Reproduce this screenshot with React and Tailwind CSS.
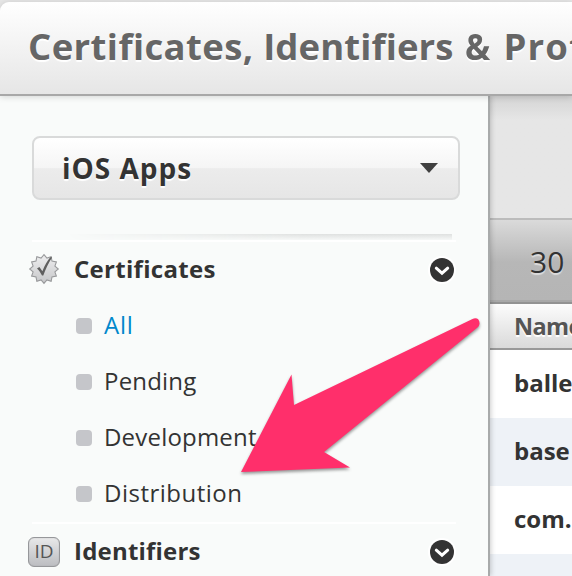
import React from "react";

const rows = ["balle", "base", "com.", ""];

const items = [
  { label: "All", style: "text-[#0088cc] tracking-[0.7px]" },
  { label: "Pending", style: "text-[#333] tracking-[0.2px]" },
  { label: "Development", style: "text-[#333] tracking-[0.2px]" },
  { label: "Distribution", style: "text-[#333] tracking-[0.5px]" },
];

function SealIcon() {
  const points = Array.from({ length: 24 }, (_, i) => {
    const r = i % 2 === 0 ? 14.3 : 11.3;
    const a = (i * Math.PI) / 12;
    return `${(16 + r * Math.sin(a)).toFixed(2)},${(16 - r * Math.cos(a)).toFixed(2)}`;
  }).join(" ");
  return (
    <svg className="h-8 w-8" viewBox="0 0 32 32">
      <defs>
        <linearGradient id="seal" x1="0" y1="0" x2="0" y2="1">
          <stop offset="0" stopColor="#eeeeef" />
          <stop offset="1" stopColor="#c6c7c9" />
        </linearGradient>
      </defs>
      <polygon points={points} fill="url(#seal)" stroke="#98999b" strokeWidth="1.1" />
      <path d="M9 15.500l2.400-1.500 3 4.200C16.800 12.500 19 8 22.300 4.300h1.800C20.500 10 17.400 16.500 15.300 22.500h-1.300C12.800 20 11.100 17.500 9 15.500z" fill="#5f5f5f" />
    </svg>
  );
}

function IdIcon() {
  return (
    <div className="flex h-[30px] w-8 items-center justify-center rounded-[6px] border border-[#96979a] bg-linear-to-b from-[#e8e8e9] to-[#bcbdc1] pb-px font-['Open_Sans',sans-serif] text-[19px] leading-none font-medium text-[#555] shadow-[inset_0_0_1px_#999]">
      ID
    </div>
  );
}

function Toggle() {
  return (
    <svg className="h-7 w-7" viewBox="0 0 28 28">
      <circle cx="14" cy="14" r="14" fill="#fff" />
      <circle cx="14" cy="14" r="12" fill="#333" />
      <path d="M8.300 12.200L14 17.200l5.700-5" fill="none" stroke="#fff" strokeWidth="3" strokeLinecap="round" />
    </svg>
  );
}

function SectionTitle({ icon, children }) {
  return (
    <div className="flex h-14 items-center pr-8 pl-7">
      <div className="flex w-8 shrink-0 justify-center">{icon}</div>
      <div className="-mt-[2px] ml-[14px] flex-1 text-[24px] leading-8 font-bold text-[#333]">{children}</div>
      <Toggle />
    </div>
  );
}

export default function App() {
  return (
    <div className="relative flex h-[576px] w-[572px] flex-col overflow-hidden bg-[#e6e6e6] pt-[2px] font-['Open_Sans','Noto_Sans',sans-serif] whitespace-nowrap">
      <header className="z-10 flex h-[94px] shrink-0 items-start rounded-tl-[9px] border-b-2 border-[#a8a8a8] bg-linear-to-b from-white to-[#e6e6e6] pt-[19px] pl-[28px] shadow-[0_1px_6px_rgba(0,0,0,0.15)]">
        <h1 className="text-[36.5px] leading-[50px] font-bold text-[#666] [text-shadow:0_2px_1px_#fff]">
          <span className="tracking-[0.4px]">Certificates,</span>{" "}
          <span className="tracking-[0.1px]">Identifiers</span>{" "}
          <span className="ml-[2px] inline-block w-[27px] origin-left scale-x-[0.92]">&amp;</span>{" "}
          <span className="ml-[2px] tracking-[1.2px]">Profiles</span>
        </h1>
      </header>

      <div className="flex min-h-0 flex-1">
        <aside className="z-[5] w-[490px] shrink-0 border-r-2 border-[#a8aaaa] bg-[#f9fbfa] pt-10 shadow-[1px_0_5px_rgba(0,0,0,0.2)]">
          <div className="ml-8 flex h-16 w-[428px] items-center justify-between rounded-[8px] border-2 border-[#d9dada] bg-[linear-gradient(#ffffff_0%,#f5f5f5_50%,#ececec_51%,#e6e6e6_100%)] pr-5 pl-7">
            <span className="text-[28px] leading-9 font-bold tracking-[1px] text-[#333] [text-shadow:0_2px_1px_#fff]">iOS Apps</span>
            <svg className="h-[10px] w-[18px]" viewBox="0 0 18 10">
              <path d="M0 0h18L9 10z" fill="#404040" />
            </svg>
          </div>
          <div className="mt-[34px] ml-8 h-[6px] w-[420px] bg-linear-to-b from-[#dfe1e0] to-[#f6f8f7] [mask-image:linear-gradient(to_right,transparent_8%,black_65%)]" />
          <div className="ml-8 h-[2px] w-[424px] bg-white" />

          <SectionTitle icon={<div className="-mt-[2px]"><SealIcon /></div>}>
            <span className="tracking-[0.3px]">Certificates</span>
          </SectionTitle>
          <ul>
            {items.map((item) => (
              <li key={item.label} className="flex h-14 items-center pl-[76px]">
                <span className="h-4 w-4 rounded-[4px] bg-[#c5c6ca]" />
                <span className={"-mt-[2px] ml-[12px] text-[24px] leading-8 " + item.style}>{item.label}</span>
              </li>
            ))}
          </ul>
          <div className="ml-8 h-[2px] w-[424px] bg-white" />
          <SectionTitle icon={<IdIcon />}>
            <span className="tracking-[0.2px]">Identifiers</span>
          </SectionTitle>
        </aside>

        <main className="flex min-w-0 flex-1 flex-col">
          <div className="h-[122px] shrink-0 bg-linear-to-b from-[#d4d4d4] to-[#e6e6e6] to-[24px]" />
          <div className="flex h-[86px] shrink-0 items-center border-t-2 border-b-2 border-t-[#bcbcbc] border-b-[#929292] bg-[linear-gradient(#dadada_0px,#b7b7b7_42px,#b5b5b5_80px,#a8a8a8_80px)] pt-px pl-[40px] text-[30px] text-[#333] [text-shadow:0_2px_1px_#ddd]">
            30
          </div>
          <div className="flex h-[46px] shrink-0 items-center border-b-2 border-[#999] bg-linear-to-b from-[#fcfcfc] to-[#dadada] pt-px pl-6 text-[23.5px] font-bold tracking-[-0.6px] text-[#555] [text-shadow:0_2px_1px_#fff]">
            Name
          </div>
          {rows.map((row, i) => (
            <div key={i} className="flex h-[68px] shrink-0 items-center bg-white pb-[2px] pl-6 text-[24px] font-bold text-[#333] even:bg-white odd:bg-[#eef2f7]">
              {row}
            </div>
          ))}
        </main>
      </div>

      <svg className="pointer-events-none absolute inset-0 z-20 h-[576px] w-[572px] [filter:drop-shadow(0_2px_1.5px_rgba(0,0,0,0.4))]" viewBox="0 0 572 576">
        <path d="M241 472L291.500 374.500L294 405L472.500 319C477 317 480 320 479.500 324Q479.200 326 477.500 327.500L324 452L350 467.500Z" fill="#ff2f6b" />
      </svg>
    </div>
  );
}
